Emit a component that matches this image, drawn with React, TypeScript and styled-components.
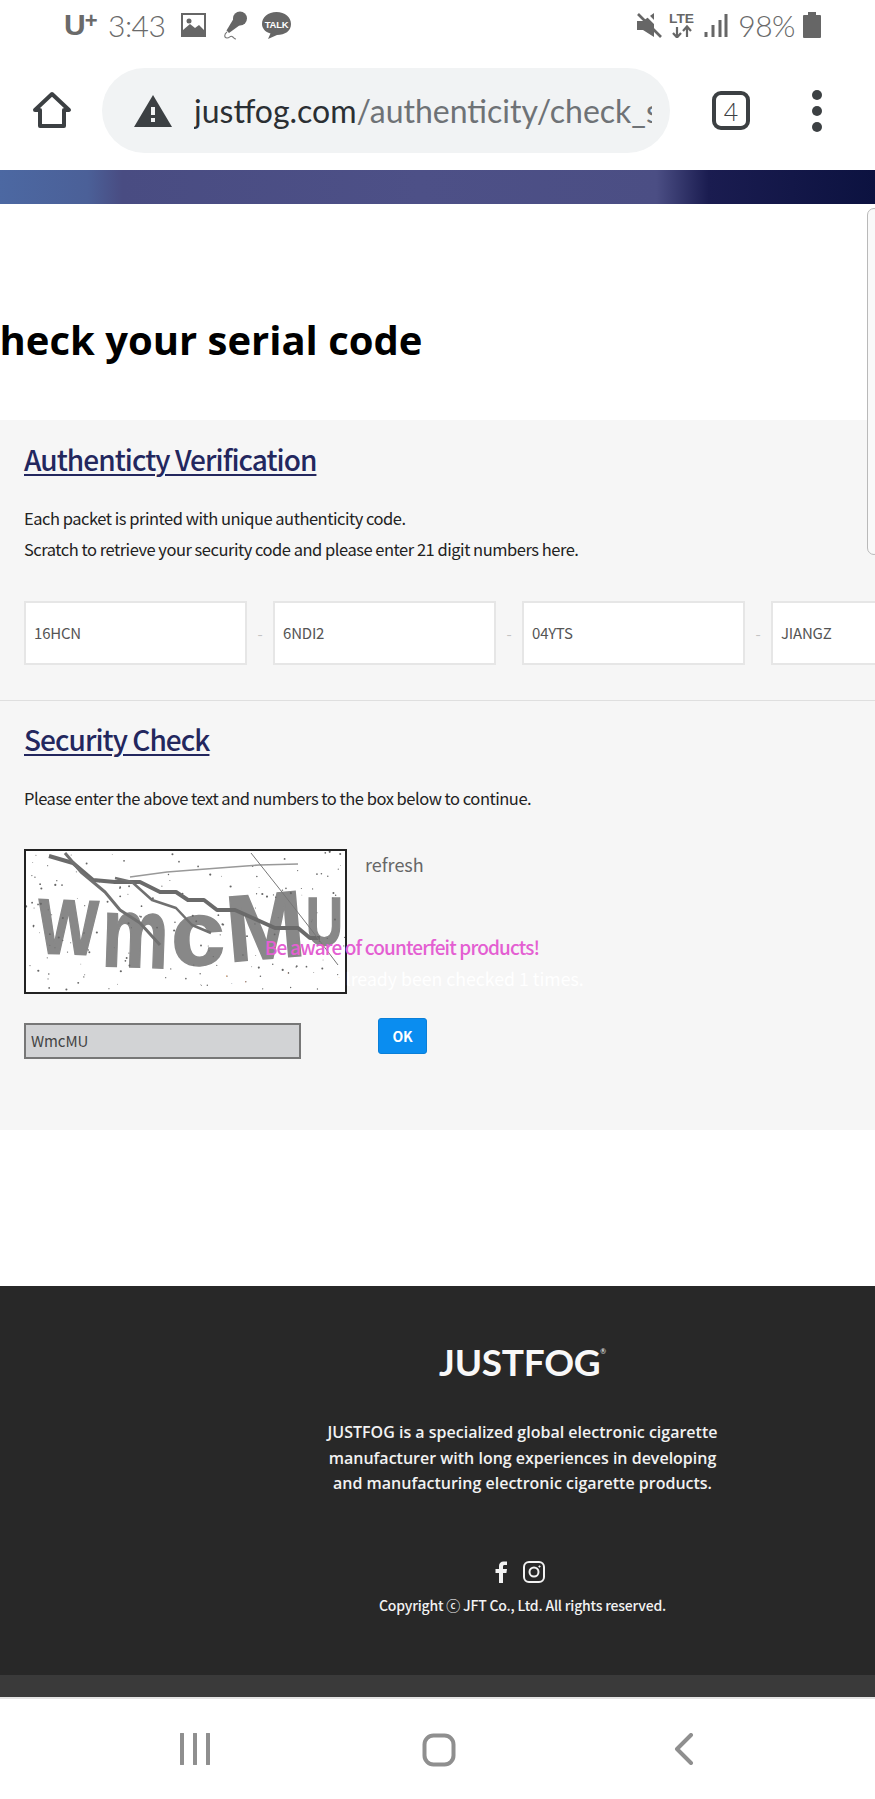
import React from "react";
import styled, { createGlobalStyle } from "styled-components";

/**
 * STYLES
 */
const GlobalStyle = createGlobalStyle`
  html, body {
    margin: 0;
    padding: 0;
    background: #fff;
  }
  * {
    box-sizing: border-box;
  }
`;

const Page = styled.div`
  position: relative;
  width: 875px;
  height: 1799px;
  overflow: hidden;
  background: #fff;
  font-family: "Noto Sans CJK KR", "Noto Sans", sans-serif;
`;

const StatusBar = styled.div`
  height: 68px;
  padding: 0 54px 18px 64px;
  display: flex;
  align-items: center;
  justify-content: space-between;
  color: #6a6a6a;
`;

const StatusGroup = styled.div`
  display: flex;
  align-items: center;
`;

const Carrier = styled.span`
  font: 700 30px "Liberation Sans", sans-serif;
  letter-spacing: -1px;
  width: 44px;
  sup {
    font-size: 22px;
    line-height: 0;
    vertical-align: 7px;
  }
`;

const StatusText = styled.span`
  font: 300 30px "Lato", sans-serif;
  letter-spacing: -0.5px;
`;

const AddressBar = styled.div`
  height: 102px;
  padding-bottom: 17px;
  display: flex;
  align-items: center;
`;

const HomeSlot = styled.div`
  width: 102px;
  padding-left: 32px;
  display: flex;
`;

const UrlPill = styled.div`
  width: 568px;
  height: 85px;
  border-radius: 43px;
  background: #f1f3f4;
  padding-left: 32px;
  display: flex;
  align-items: center;
  gap: 22px;
`;

const UrlText = styled.div`
  width: 458px;
  overflow: hidden;
  white-space: nowrap;
  font: 400 32px "Lato", sans-serif;
  color: #6e7276;
  b {
    font-weight: 400;
    color: #2b2f33;
  }
`;

const TabSlot = styled.div`
  width: 38px;
  height: 39px;
  margin-left: 42px;
  border: 4px solid #3c4043;
  border-radius: 9px;
  display: flex;
  align-items: center;
  justify-content: center;
  font: 300 25px "Lato", sans-serif;
  color: #3c4043;
`;

const MenuDots = styled.div`
  margin-left: 62px;
  display: flex;
  flex-direction: column;
  gap: 6px;
  span {
    width: 10px;
    height: 10px;
    border-radius: 50%;
    background: #3c4043;
  }
`;

const Banner = styled.div`
  height: 34px;
  background: linear-gradient(90deg, #4c68a2 0%, #4b6098 10%, #494c82 14%, #4d5087 48%, #4b4e84 75%, #1a1c50 81%, #0c1240 100%);
`;

const SideHandle = styled.div`
  position: absolute;
  z-index: 2;
  top: 208px;
  right: -6px;
  width: 14px;
  height: 347px;
  border: 1px solid #b9b9b9;
  border-radius: 9px;
  background: #f9f9f9;
`;

const HeadingBlock = styled.div`
  height: 216px;
  padding-top: 106px;
`;

const PageTitle = styled.h1`
  margin: 0 0 0 -26px;
  font: 700 40px/60px "Open Sans", sans-serif;
  color: #000;
  white-space: nowrap;
`;

const Section = styled.section`
  position: relative;
  height: 710px;
  background: #f6f6f6;
`;

const Block = styled.div<{ $height: number; $top: number }>`
  height: ${(p) => p.$height}px;
  padding: ${(p) => p.$top}px 0 0 24px;
`;

const BlockTitle = styled.h2`
  margin: 0;
  font: 500 28px/44px "Noto Sans CJK KR", sans-serif;
  letter-spacing: -0.95px;
  color: #23275e;
  text-decoration: underline;
  text-decoration-thickness: 2px;
  text-underline-offset: 3px;
`;

const Copy = styled.p`
  margin: 22px 0 0;
  font: 400 16.5px/31px "Noto Sans CJK KR", sans-serif;
  letter-spacing: -0.48px;
  color: #222;
`;

const CodeRow = styled.div`
  margin-top: 36px;
  display: flex;
  align-items: center;
  width: 1000px;
`;

const CodeInput = styled.input`
  width: 223px;
  height: 64px;
  flex: none;
  padding: 0 8px 2px;
  border: 2px solid #e6e6e6;
  background: #fff;
  outline: none;
  font: 400 15px "Noto Sans CJK KR", sans-serif;
  letter-spacing: -0.2px;
  color: #555;
`;

const Dash = styled.span`
  width: 26px;
  text-align: center;
  font: 400 15px "Noto Sans CJK KR", sans-serif;
  color: #c4c4c4;
`;

const Divider = styled.div`
  height: 1px;
  background: #dfdfdf;
`;

const CaptchaRow = styled.div`
  margin-top: 35px;
  display: flex;
  align-items: flex-start;
`;

const CaptchaFrame = styled.div`
  width: 323px;
  height: 145px;
  border: 2px solid #222;
  background: #fff;
  line-height: 0;
`;

const RefreshLink = styled.span`
  margin: 0 0 0 18px;
  font: 400 18px/30px "Noto Sans CJK KR", sans-serif;
  color: #666;
`;

const EntryRow = styled.div`
  margin-top: 24px;
  display: flex;
  align-items: flex-start;
`;

const CaptchaInput = styled.input`
  width: 277px;
  height: 36px;
  margin-top: 5px;
  padding: 0 5px 2px;
  border: 2px solid #777;
  background: #d2d3d5;
  outline: none;
  font: 400 15px "Noto Sans CJK KR", sans-serif;
  letter-spacing: -0.1px;
  color: #444;
`;

const OkButton = styled.button`
  width: 49px;
  height: 36px;
  margin-left: 77px;
  padding: 0;
  border: 1px solid #0a7fd8;
  border-radius: 3px;
  background: #0a8df0;
  color: #fff;
  font: 700 14px "Noto Sans CJK KR", sans-serif;
  letter-spacing: -0.3px;
`;

const Notice = styled.div`
  position: absolute;
  top: 511px;
  left: 0;
  width: 804px;
  text-align: center;
  font: 500 19px/31px "Noto Sans CJK KR", sans-serif;
  letter-spacing: -0.85px;
  color: #e45fd2;
  pointer-events: none;
`;

const NoticeFaint = styled.div`
  font-weight: 400;
  letter-spacing: 0;
  font-size: 17.7px;
  line-height: 32px;
  color: #fff;
`;

const WhiteGap = styled.div`
  height: 156px;
`;

const Footer = styled.footer`
  height: 389px;
  padding: 58px 0 0 170px;
  background: #282828;
  color: #f2f2f2;
  text-align: center;
`;

const Logo = styled.div`
  height: 36px;
  font: 700 37px/36px "Lato", sans-serif;
  letter-spacing: -0.3px;
  color: #f8f8f8;
  sup {
    font-size: 7px;
    font-weight: 400;
    vertical-align: 22px;
    line-height: 0;
  }
`;

const FooterCopy = styled.p`
  margin: 40px 0 0;
  font: 600 16px/25.5px "Open Sans", sans-serif;
`;

const SocialRow = styled.div`
  margin-top: 64px;
  height: 24px;
  padding-right: 5px;
  display: flex;
  justify-content: center;
  gap: 15px;
`;

const Copyright = styled.div`
  margin-top: 8px;
  font: 500 14px/24px "Noto Sans CJK KR", sans-serif;
  letter-spacing: -0.2px;
`;

const FooterStrip = styled.div`
  height: 22px;
  background: #3a3a3a;
`;

const NavBar = styled.div`
  height: 102px;
  padding: 34px 0 0 180px;
  border-top: 2px solid #e4e4e4;
  display: grid;
  grid-template-columns: 242px 252px auto;
  align-items: start;
`;

/**
 * ICONS
 */
const PictureIcon = () => (
  <svg width="25" height="24" viewBox="0 0 25 24" style={{ marginLeft: 16 }}>
    <rect x="1" y="1" width="23" height="22" fill="none" stroke="#666" strokeWidth="2" />
    <circle cx="8" cy="8" r="2.5" fill="#666" />
    <path d="M2 22 L2 17 L9 11 L14 15 L18 12 L23 17 L23 22 Z" fill="#666" />
  </svg>
);

const MicIcon = () => (
  <svg width="24" height="29" viewBox="0 0 24 29" style={{ marginLeft: 18 }}>
    <circle cx="16" cy="7.5" r="7" fill="#666" />
    <path d="M10 7 L16 14 L5 22 L2.5 19.5 Z" fill="#666" />
    <path d="M3 21 C0 23 0 27 3 27 C6 27 6 24.5 8 25.5 C10 26.5 10 28 12 28" stroke="#777" strokeWidth="1.1" fill="none" />
  </svg>
);

const TalkIcon = () => (
  <svg width="29" height="27" viewBox="0 0 29 27" style={{ marginLeft: 14 }}>
    <path d="M14.5 0 C23 0 29 5 29 12 C29 19 23 23 15 23 L6 27 L8.5 21.5 C3 20 0 16 0 12 C0 5 6 0 14.5 0 Z" fill="#666" />
    <text x="14.5" y="15.5" fontSize="9.5" fontWeight="700" fill="#fff" textAnchor="middle" fontFamily="Liberation Sans" letterSpacing="-0.3">TALK</text>
  </svg>
);

const MuteIcon = () => (
  <svg width="25" height="25" viewBox="0 0 25 25">
    <path d="M0 8 H6 L17 0 V24 L6 17 H0 Z" fill="#666" />
    <path d="M6 -2 L28 20" stroke="#fff" strokeWidth="3" />
    <path d="M1 1 L24 24" stroke="#666" strokeWidth="2.6" />
  </svg>
);

const LteIcon = () => (
  <svg width="25" height="26" viewBox="0 0 25 26" style={{ marginLeft: 7 }}>
    <text x="12.5" y="11" fontSize="13.5" textAnchor="middle" fill="#666" fontFamily="Liberation Sans" fontWeight="700" textLength="25" lengthAdjust="spacingAndGlyphs">LTE</text>
    <path d="M8 15 V25 M4 21 L8 25.5 L12 21 M18 25 V15 M14 19 L18 14.5 L22 19" stroke="#666" strokeWidth="2.2" fill="none" />
  </svg>
);

const SignalIcon = () => (
  <svg width="24" height="23" viewBox="0 0 24 23" style={{ marginLeft: 10, marginRight: 10 }}>
    <path d="M2 23 V18 M9 23 V11 M16 23 V6 M22 23 V0" stroke="#666" strokeWidth="3" />
  </svg>
);

const BatteryIcon = () => (
  <svg width="18" height="26" viewBox="0 0 18 26" style={{ marginLeft: 8 }}>
    <path d="M5 0 H13 V3 H17 Q18 3 18 4 V25 Q18 26 17 26 H1 Q0 26 0 25 V4 Q0 3 1 3 H5 Z" fill="#666" />
  </svg>
);

const HomeIcon = () => (
  <svg width="40" height="40" viewBox="0 0 40 40">
    <path d="M3 19 L20 3 L37 19 H32 V35 H8 V19 Z" fill="none" stroke="#3c4043" strokeWidth="4" strokeLinejoin="round" />
  </svg>
);

const WarningIcon = () => (
  <svg width="38" height="32" viewBox="0 0 38 32">
    <path d="M19 0 L38 32 H0 Z" fill="#3c4043" />
    <rect x="17" y="12" width="4" height="8" fill="#f1f3f4" />
    <rect x="17" y="23" width="4" height="4" fill="#f1f3f4" />
  </svg>
);

const FacebookIcon = () => (
  <svg width="13" height="22" viewBox="0 0 13 22">
    <path d="M4 22 V12 H0.5 V8 H4 V5 C4 2 6 0.5 8.5 0.5 H12 V4 H9.5 C8.5 4 8 4.6 8 5.5 V8 H12 L11.4 12 H8 V22 Z" fill="#f2f2f2" />
  </svg>
);

const InstagramIcon = () => (
  <svg width="22" height="22" viewBox="0 0 22 22" fill="none" stroke="#f2f2f2">
    <rect x="1" y="1" width="20" height="20" rx="5" strokeWidth="2" />
    <circle cx="11" cy="11" r="4.5" strokeWidth="2" />
    <circle cx="16.5" cy="5.5" r="0.8" fill="#f2f2f2" strokeWidth="0.6" />
  </svg>
);

const NavLines = () => (
  <svg width="30" height="32" viewBox="0 0 30 32">
    <path d="M2 1 V31 M15 1 V31 M28 1 V31" stroke="#8f8f8f" strokeWidth="4" strokeLinecap="round" />
  </svg>
);

const NavHome = () => (
  <svg width="34" height="34" viewBox="0 0 34 34">
    <rect x="2.5" y="2.5" width="29" height="29" rx="9" fill="none" stroke="#8f8f8f" strokeWidth="4" />
  </svg>
);

const NavBack = () => (
  <svg width="20" height="32" viewBox="0 0 20 32">
    <path d="M17 2 L3 16 L17 30" fill="none" stroke="#8f8f8f" strokeWidth="4" strokeLinecap="round" strokeLinejoin="round" />
  </svg>
);

/**
 * CAPTCHA
 */
const makeSpecks = () => {
  let seed = 41;
  const next = () => {
    seed = (seed * 16807) % 2147483647;
    return seed / 2147483647;
  };
  return Array.from({ length: 170 }, () => ({
    x: next() * 319,
    y: next() * 141,
    r: 0.4 + next() * 0.7,
  }));
};

const specks = makeSpecks();

const glyphs = [
  { c: "W", x: 11, y: 102, size: 78, rotate: 2, sx: 0.82 },
  { c: "m", x: 75, y: 115, size: 100, rotate: 2, sx: 0.75 },
  { c: "c", x: 146, y: 115, size: 92, rotate: -2, sx: 1.05 },
  { c: "M", x: 203, y: 111, size: 94, rotate: -5, sx: 1 },
  { c: "U", x: 280, y: 94, size: 68, rotate: 0, sx: 0.75 },
];

const CaptchaImage = () => (
  <svg width="319" height="141" viewBox="0 0 319 141">
    {glyphs.map((g) => (
      <text
        key={g.c}
        transform={`translate(${g.x} ${g.y}) rotate(${g.rotate}) scale(${g.sx} 1)`}
        fontFamily="Liberation Sans"
        fontWeight="700"
        fontSize={g.size}
        fill="#888"
        stroke="#888"
        strokeWidth="1.5"
      >
        {g.c}
      </text>
    ))}
    {specks.map((s, i) => (
      <circle key={i} cx={s.x} cy={s.y} r={s.r} fill="#666" />
    ))}
    <g fill="none" strokeLinejoin="round">
      <path d="M23 5 L47 12 L67 29 L89 31 L114 31 L134 41 L150 41 L162 49 L178 49 L191 59 L209 59 L229 68 L249 77 L272 77 L284 87 L294 87" stroke="#6a6a6a" strokeWidth="4" />
      <path d="M39 2 L55 21 L79 41 L94 59 L114 72 L134 94" stroke="#707070" strokeWidth="3" />
      <path d="M89 27 L106 31 L126 49 L150 57 L166 74 L185 82" stroke="#707070" strokeWidth="2.5" />
      <path d="M104 26 L141 21 L193 17 L233 14 L272 13" stroke="#999" strokeWidth="1.5" />
      <path d="M225 2 L252 36 L284 77 L312 114" stroke="#777" strokeWidth="1" />
    </g>
  </svg>
);

/**
 * COMPONENT
 */
export const App = () => {
  const codes = ["16HCN", "6NDI2", "04YTS", "JIANGZ"];

  return (
    <Page>
      <GlobalStyle />
      <StatusBar>
        <StatusGroup>
          <Carrier>U<sup>+</sup></Carrier>
          <StatusText>3:43</StatusText>
          <PictureIcon />
          <MicIcon />
          <TalkIcon />
        </StatusGroup>
        <StatusGroup>
          <MuteIcon />
          <LteIcon />
          <SignalIcon />
          <StatusText>98%</StatusText>
          <BatteryIcon />
        </StatusGroup>
      </StatusBar>

      <AddressBar>
        <HomeSlot><HomeIcon /></HomeSlot>
        <UrlPill>
          <WarningIcon />
          <UrlText><b>justfog.com</b>/authenticity/check_serial</UrlText>
        </UrlPill>
        <TabSlot>4</TabSlot>
        <MenuDots><span /><span /><span /></MenuDots>
      </AddressBar>

      <Banner />
      <SideHandle />

      <HeadingBlock>
        <PageTitle>Check your serial code</PageTitle>
      </HeadingBlock>

      <Section>
        <Block $height={280} $top={17}>
          <BlockTitle>Authenticty Verification</BlockTitle>
          <Copy>
            Each packet is printed with unique authenticity code.<br />
            Scratch to retrieve your security code and please enter 21 digit numbers here.
          </Copy>
          <CodeRow>
            {codes.map((code, i) => (
              <React.Fragment key={code}>
                {i > 0 && <Dash>-</Dash>}
                <CodeInput readOnly value={code} />
              </React.Fragment>
            ))}
          </CodeRow>
        </Block>
        <Divider />
        <Block $height={429} $top={16}>
          <BlockTitle>Security Check</BlockTitle>
          <Copy>Please enter the above text and numbers to the box below to continue.</Copy>
          <CaptchaRow>
            <CaptchaFrame><CaptchaImage /></CaptchaFrame>
            <RefreshLink>refresh</RefreshLink>
          </CaptchaRow>
          <EntryRow>
            <CaptchaInput readOnly value="WmcMU" />
            <OkButton>OK</OkButton>
          </EntryRow>
        </Block>
        <Notice>
          Be aware of counterfeit products!
          <NoticeFaint>This code has already been checked 1 times.</NoticeFaint>
        </Notice>
      </Section>

      <WhiteGap />

      <Footer>
        <Logo>JUSTFOG<sup>®</sup></Logo>
        <FooterCopy>
          JUSTFOG is a specialized global electronic cigarette<br />
          manufacturer with long experiences in developing<br />
          and manufacturing electronic cigarette products.
        </FooterCopy>
        <SocialRow>
          <FacebookIcon />
          <InstagramIcon />
        </SocialRow>
        <Copyright>Copyright ⓒ JFT Co., Ltd. All rights reserved.</Copyright>
      </Footer>
      <FooterStrip />

      <NavBar>
        <NavLines />
        <NavHome />
        <NavBack />
      </NavBar>
    </Page>
  );
};

export default App;
